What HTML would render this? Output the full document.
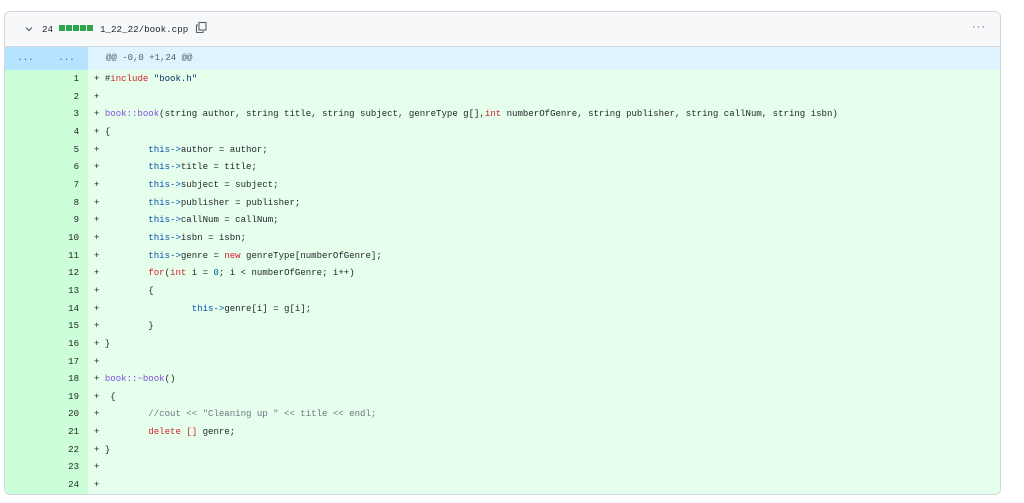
<!DOCTYPE html>
<html><head><style>
body{margin:0;background:#fff;width:1024px;height:503px;overflow:hidden;font-family:"Liberation Sans",sans-serif}
.box{position:absolute;left:4px;top:11px;width:995px;height:482px;border:1px solid #d0d7de;border-radius:6px;overflow:hidden}
.hd{height:34px;background:#f6f8fa;border-bottom:1px solid #d0d7de;position:relative;font-size:10px;color:#1f2328}
.hd .chev{position:absolute;left:19px;top:12px}
.hd .n{position:absolute;left:37px;top:12px;font-family:"Liberation Mono",monospace;font-size:9.2px}
.sq{position:absolute;top:13px;width:6px;height:6px;background:#2da44e}
.hd .fn{position:absolute;left:95px;top:12px;font-family:"Liberation Mono",monospace;font-size:9.2px}
.hd .cp{position:absolute;left:190px;top:9px}
.hd .dots{position:absolute;right:14px;top:9px;font-size:11px;letter-spacing:1px;color:#57606a}
.hunk{height:23px;display:flex;font-family:"Liberation Mono",monospace;font-size:9px;color:#57606a;line-height:23px}
.hunk .g{width:83px;background:#b6e3ff;display:flex}
.hunk .g span{width:41px;text-align:center}
.hunk .c{flex:1;background:#ddf4ff;padding-left:18px}
.row{height:17.67px;display:flex;font-family:"Liberation Mono",monospace;font-size:9.05px;line-height:17.67px;color:#1f2328;white-space:pre}
.row .g{width:83px;background:#ccffd8;text-align:right;box-sizing:border-box;padding-right:9px;color:#1f2328}
.row .c{flex:1;background:#e6ffec;padding-left:6px}
.k{color:#cf222e}.s{color:#0a3069}.f{color:#8250df}.t{color:#0550ae}.cm{color:#6e7781}
</style></head><body>
<div class="box">
<div class="hd">
<svg class="chev" width="10" height="10" viewBox="0 0 10 10"><path d="M2 3.5 L5 6.5 L8 3.5" fill="none" stroke="#57606a" stroke-width="1.2"/></svg>
<span class="n">24</span>
<span class="sq" style="left:54px"></span><span class="sq" style="left:61px"></span><span class="sq" style="left:68px"></span><span class="sq" style="left:75px"></span><span class="sq" style="left:82px"></span>
<span class="fn">1_22_22/book.cpp</span>
<svg class="cp" width="13" height="13" viewBox="0 0 13 13"><path d="M3 4 H1.5 V11.5 H8 V10" fill="none" stroke="#57606a" stroke-width="1.1"/><rect x="4" y="1.5" width="7" height="7.5" fill="none" stroke="#57606a" stroke-width="1.1"/></svg>
<span class="dots">···</span>
</div>
<div class="hunk"><div class="g"><span>...</span><span>...</span></div><div class="c">@@ -0,0 +1,24 @@</div></div>
<div class="row"><div class="g">1</div><div class="c">+ #<span class="k">include</span> <span class="s">"book.h"</span></div></div>
<div class="row"><div class="g">2</div><div class="c">+</div></div>
<div class="row"><div class="g">3</div><div class="c">+ <span class="f">book::book</span>(string author, string title, string subject, genreType g[],<span class="k">int</span> numberOfGenre, string publisher, string callNum, string isbn)</div></div>
<div class="row"><div class="g">4</div><div class="c">+ {</div></div>
<div class="row"><div class="g">5</div><div class="c">+         <span class="t">this-&gt;</span>author = author;</div></div>
<div class="row"><div class="g">6</div><div class="c">+         <span class="t">this-&gt;</span>title = title;</div></div>
<div class="row"><div class="g">7</div><div class="c">+         <span class="t">this-&gt;</span>subject = subject;</div></div>
<div class="row"><div class="g">8</div><div class="c">+         <span class="t">this-&gt;</span>publisher = publisher;</div></div>
<div class="row"><div class="g">9</div><div class="c">+         <span class="t">this-&gt;</span>callNum = callNum;</div></div>
<div class="row"><div class="g">10</div><div class="c">+         <span class="t">this-&gt;</span>isbn = isbn;</div></div>
<div class="row"><div class="g">11</div><div class="c">+         <span class="t">this-&gt;</span>genre = <span class="k">new</span> genreType[numberOfGenre];</div></div>
<div class="row"><div class="g">12</div><div class="c">+         <span class="k">for</span>(<span class="k">int</span> i = <span class="t">0</span>; i &lt; numberOfGenre; i++)</div></div>
<div class="row"><div class="g">13</div><div class="c">+         {</div></div>
<div class="row"><div class="g">14</div><div class="c">+                 <span class="t">this-&gt;</span>genre[i] = g[i];</div></div>
<div class="row"><div class="g">15</div><div class="c">+         }</div></div>
<div class="row"><div class="g">16</div><div class="c">+ }</div></div>
<div class="row"><div class="g">17</div><div class="c">+</div></div>
<div class="row"><div class="g">18</div><div class="c">+ <span class="f">book::~book</span>()</div></div>
<div class="row"><div class="g">19</div><div class="c">+  {</div></div>
<div class="row"><div class="g">20</div><div class="c">+         <span class="cm">//cout &lt;&lt; "Cleaning up " &lt;&lt; title &lt;&lt; endl;</span></div></div>
<div class="row"><div class="g">21</div><div class="c">+         <span class="k">delete</span> <span class="k">[]</span> genre;</div></div>
<div class="row"><div class="g">22</div><div class="c">+ }</div></div>
<div class="row"><div class="g">23</div><div class="c">+</div></div>
<div class="row"><div class="g">24</div><div class="c">+</div></div>
</div>
</body></html>
